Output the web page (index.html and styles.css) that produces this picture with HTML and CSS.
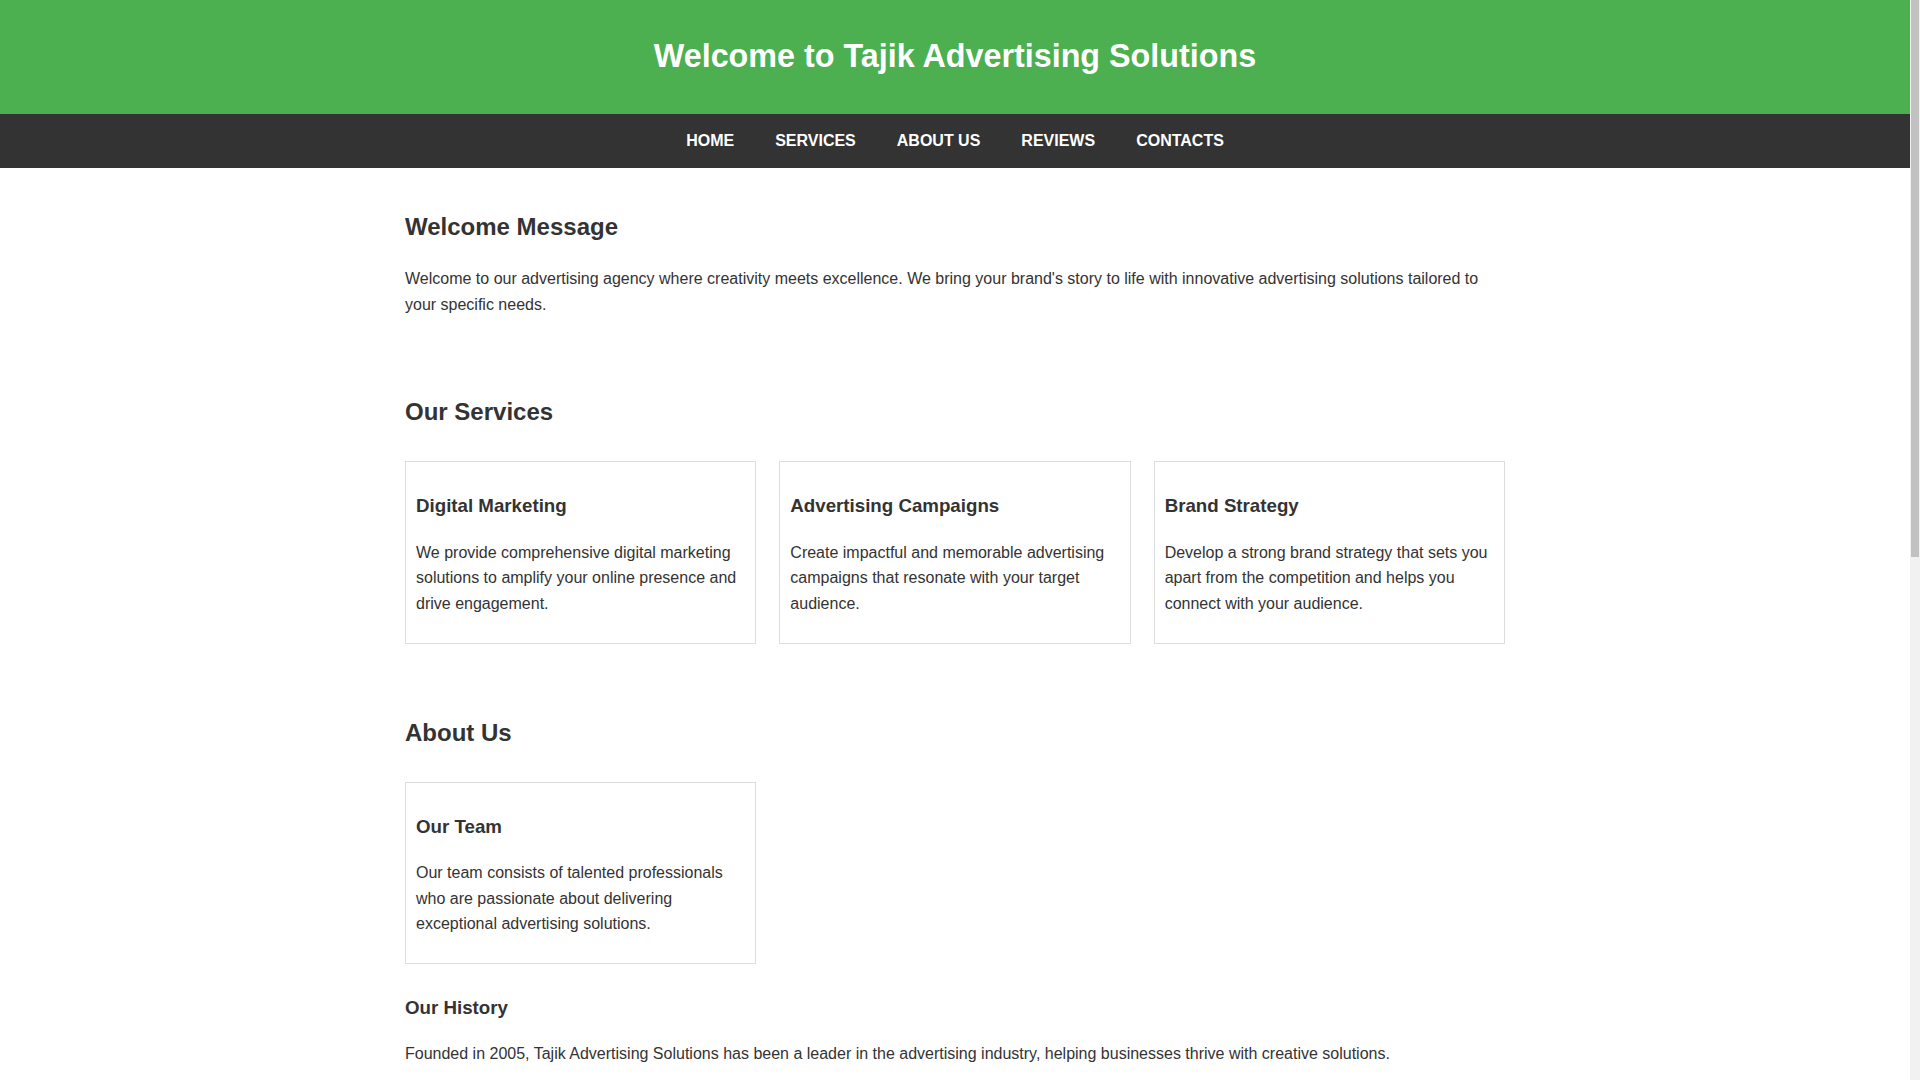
FILE: index.html
```html
<!DOCTYPE html>
<html lang="en">
<head>
<meta charset="UTF-8">
<title>Tajik Advertising Solutions</title>
<link rel="stylesheet" href="styles.css">
</head>
<body>
<div class="page">
  <header class="site-header">
    <h1 class="site-title">Welcome to Tajik Advertising Solutions</h1>
  </header>
  <nav class="main-nav">
    <a href="#home" class="nav-link">Home</a>
    <a href="#services" class="nav-link">Services</a>
    <a href="#about" class="nav-link">About Us</a>
    <a href="#reviews" class="nav-link">Reviews</a>
    <a href="#contacts" class="nav-link">Contacts</a>
  </nav>
  <main class="container">
    <section class="section" id="home">
      <h2>Welcome Message</h2>
      <p>Welcome to our advertising agency where creativity meets excellence. We bring your brand's story to life with innovative advertising solutions tailored to your specific needs.</p>
    </section>

    <section class="section" id="services">
      <h2>Our Services</h2>
      <div class="card-grid">
        <div class="card">
          <h3>Digital Marketing</h3>
          <p>We provide comprehensive digital marketing solutions to amplify your online presence and drive engagement.</p>
        </div>
        <div class="card">
          <h3>Advertising Campaigns</h3>
          <p>Create impactful and memorable advertising campaigns that resonate with your target audience.</p>
        </div>
        <div class="card">
          <h3>Brand Strategy</h3>
          <p>Develop a strong brand strategy that sets you apart from the competition and helps you connect with your audience.</p>
        </div>
      </div>
    </section>

    <section class="section" id="about">
      <h2>About Us</h2>
      <div class="card-grid">
        <div class="card">
          <h3>Our Team</h3>
          <p>Our team consists of talented professionals who are passionate about delivering exceptional advertising solutions.</p>
        </div>
      </div>
      <h3>Our History</h3>
      <p>Founded in 2005, Tajik Advertising Solutions has been a leader in the advertising industry, helping businesses thrive with creative solutions.</p>
    </section>

    <section class="section" id="reviews">
      <h2>Reviews</h2>
      <div class="card-grid">
        <div class="card">
          <h3>Farrukh Rahimov</h3>
          <p>"Their team transformed our brand and doubled our online sales within a few months. Highly recommended!"</p>
        </div>
        <div class="card">
          <h3>Malika Saidova</h3>
          <p>"Creative, professional and always on time. Our campaign exceeded every expectation we had."</p>
        </div>
        <div class="card">
          <h3>Rustam Nazarov</h3>
          <p>"A reliable partner for all our advertising needs. The brand strategy they built works wonders."</p>
        </div>
      </div>
    </section>

    <section class="section" id="contacts">
      <h2>Contacts</h2>
      <p>Email: info@tajikadvertising.tj</p>
      <p>Phone: +992 37 123 4567</p>
      <p>Address: 12 Rudaki Avenue, Dushanbe, Tajikistan</p>
      <form class="contact-form">
        <label class="form-label" for="name">Name</label>
        <input class="form-input" id="name" type="text">
        <label class="form-label" for="email">Email</label>
        <input class="form-input" id="email" type="email">
        <label class="form-label" for="msg">Message</label>
        <textarea class="form-input form-text" id="msg"></textarea>
        <button class="form-button" type="button">Send Message</button>
      </form>
    </section>
  </main>
  <footer class="site-footer">
    <p>&copy; 2024 Tajik Advertising Solutions. All rights reserved.</p>
  </footer>
</div>
<div class="scrollbar" aria-hidden="true">
  <div class="scrollbar-thumb"></div>
</div>
</body>
</html>
```

FILE: styles.css
```css
body {
  margin: 0;
  font-family: "Liberation Sans", Arial, sans-serif;
  line-height: 1.6;
  color: #333;
  background: #fff;
  display: flex;
  align-items: flex-start;
}

.page {
  flex: 1;
  min-width: 0;
}

.scrollbar {
  flex: none;
  width: 10px;
  height: 100vh;
  position: sticky;
  top: 0;
  background: #f1f1f1;
}

.scrollbar-thumb {
  height: 557px;
  margin: 0 1px;
  background: #c1c1c1;
}

.site-header {
  background: #4caf50;
  color: #fff;
  text-align: center;
  padding: 10px;
}

.site-title {
  font-size: 32.3px;
  margin: 21.3px 0;
}

.main-nav {
  background: #333;
  display: flex;
  justify-content: center;
  gap: 1px;
}

.nav-link {
  color: #fff;
  text-decoration: none;
  text-transform: uppercase;
  font-weight: bold;
  font-size: 16px;
  padding: 14px 20px;
}

.container {
  max-width: 1100px;
  margin: 0 auto;
  padding: 20px;
}

.section {
  display: flow-root;
  margin-bottom: 40px;
}

h2 {
  font-size: 24px;
  margin: 19.92px 0;
}

h3 {
  font-size: 18.72px;
  margin: 18.72px 0;
}

p {
  margin: 16px 0;
}

.card-grid {
  display: grid;
  grid-template-columns: repeat(3, 1fr);
  column-gap: 23px;
}

.card {
  border: 1px solid #ddd;
  padding: 10px;
  margin: 10px 0;
  display: flow-root;
}

.contact-form {
  display: flex;
  flex-direction: column;
  gap: 6px;
  max-width: 600px;
}

.form-label {
  font-weight: bold;
}

.form-input {
  font: inherit;
  height: 40px;
  border: 1px solid #ddd;
  padding: 0 10px;
  box-sizing: border-box;
}

.form-text {
  height: 80px;
}

.form-button {
  align-self: flex-start;
  font: inherit;
  font-weight: bold;
  background: #4caf50;
  color: #fff;
  border: none;
  padding: 9px 20px;
}

.site-footer {
  background: #333;
  color: #fff;
  text-align: center;
  padding: 20px;
}

.site-footer p {
  margin: 0;
}
```
